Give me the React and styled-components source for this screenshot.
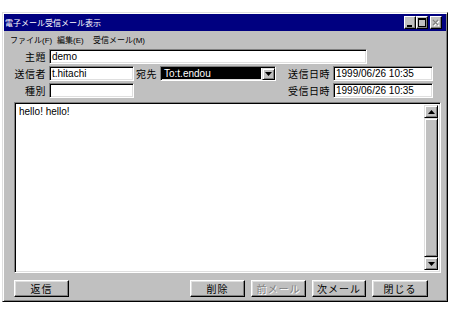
import React from "react";
import styled, { createGlobalStyle } from "styled-components";

const GlobalStyle = createGlobalStyle`
  body {
    margin: 0;
    background: #fff;
    font-family: "Liberation Sans", "Noto Sans CJK JP", sans-serif;
  }
`;

const Window = styled.div`
  margin: 12px 0 0 2px;
  width: 446px;
  height: 290px;
  box-sizing: border-box;
  background: #c0c0c0;
  border: 1px solid;
  border-color: #dfdfdf #000 #000 #dfdfdf;
  box-shadow: inset 1px 1px #fff, inset -1px -1px #808080;
  padding: 1px;
  display: flex;
  flex-direction: column;
`;

const TitleBar = styled.div`
  height: 17px;
  flex: none;
  background: #000080;
  color: #fff;
  display: flex;
  align-items: center;
  padding: 0 4px 0 1px;
  font-size: 8px;
`;

const TitleText = styled.div`
  flex: 1;
  white-space: nowrap;
`;

const CaptionButton = styled.div`
  width: 12px;
  height: 13px;
  box-sizing: border-box;
  background: #c0c0c0;
  border: 1px solid;
  border-color: #fff #000 #000 #fff;
  box-shadow: inset -1px -1px #808080;
  margin-left: ${(p) => p.$gap || 0}px;
  display: flex;
  align-items: center;
  justify-content: center;
`;

const MenuBar = styled.div`
  height: 16px;
  flex: none;
  display: flex;
  align-items: center;
  padding-left: 6px;
  font-size: 8px;
`;

const MenuItem = styled.div`
  width: ${(p) => p.$w}px;
  white-space: nowrap;
`;

const Form = styled.div`
  padding-top: 2px;
  display: flex;
  flex-direction: column;
  gap: 2px;
`;

const Row = styled.div`
  display: flex;
  align-items: center;
  height: 15px;
`;

const Label = styled.div`
  width: ${(p) => p.$w}px;
  box-sizing: border-box;
  text-align: right;
  padding-right: 3px;
  font-size: 10px;
  letter-spacing: 0.5px;
  white-space: nowrap;
`;

const Sunken = styled.div`
  box-sizing: border-box;
  border: 1px solid;
  border-color: #808080 #fff #fff #808080;
  box-shadow: inset 1px 1px #000, inset -1px -1px #dfdfdf;
`;

const Field = styled(Sunken)`
  width: ${(p) => p.$w}px;
  height: 15px;
  background: #fff;
  padding: 1px 1px 0 2px;
  font-size: 10px;
  line-height: 12px;
  white-space: nowrap;
  overflow: hidden;
`;

const Select = styled(Sunken)`
  width: ${(p) => p.$w}px;
  height: 15px;
  background: #fff;
  padding: 1px 0 0 1px;
  display: flex;
  gap: 1px;
`;

const Selected = styled.div`
  flex: 1;
  height: 11px;
  background: #000;
  color: #fff;
  font-size: 10px;
  line-height: 11px;
  padding-left: 2px;
  white-space: nowrap;
`;

const Raised = styled.div`
  box-sizing: border-box;
  background: #c0c0c0;
  border: 1px solid;
  border-color: #dfdfdf #000 #000 #dfdfdf;
  box-shadow: inset 1px 1px #fff, inset -1px -1px #808080;
  display: flex;
  align-items: center;
  justify-content: center;
`;

const DropButton = styled(Raised)`
  width: 13px;
  height: 12px;
`;

const TextPane = styled(Sunken)`
  margin: 4px 5px 0 10px;
  height: 171px;
  flex: none;
  display: flex;
  padding: 2px;
  background: #fff;
`;

const TextContent = styled.div`
  flex: 1;
  padding: 1px 2px;
  font-size: 10px;
  line-height: 12px;
`;

const ScrollBar = styled.div`
  width: 14px;
  display: flex;
  flex-direction: column;
  background: #c0c0c0;
`;

const ScrollArrow = styled(Raised)`
  height: 13px;
  flex: none;
`;

const ScrollTrack = styled(Raised)`
  flex: 1;
`;

const ButtonRow = styled.div`
  margin-top: 7px;
  height: 17px;
  display: flex;
  padding: 0 18px 0 10px;
`;

const ButtonGroup = styled.div`
  margin-left: auto;
  display: flex;
  gap: 6px;
`;

const Button = styled.div`
  width: ${(p) => p.$w}px;
  height: 17px;
  box-sizing: border-box;
  background: #c0c0c0;
  border: 1px solid;
  border-color: #fff #000 #000 #fff;
  box-shadow: inset -1px -1px #808080, inset 1px 1px #dfdfdf;
  display: flex;
  align-items: center;
  justify-content: center;
  font-size: 10px;
  letter-spacing: 1px;
  color: ${(p) => (p.$disabled ? "#808080" : "#000")};
  text-shadow: ${(p) => (p.$disabled ? "1px 1px #fff" : "none")};
  white-space: nowrap;
`;

const Arrow = ({ down }) => (
  <svg width="7" height="4" viewBox="0 0 7 4">
    <path d={down ? "M0 0h7L3.5 4z" : "M0 4h7L3.5 0z"} fill="#000" />
  </svg>
);

const App = () => {
  return (
    <>
      <GlobalStyle />
      <Window>
        <TitleBar>
          <TitleText>電子メール受信メール表示</TitleText>
          <CaptionButton>
            <svg width="8" height="9" viewBox="0 0 8 9">
              <rect x="1" y="7" width="5" height="2" fill="#000" />
            </svg>
          </CaptionButton>
          <CaptionButton>
            <svg width="8" height="9" viewBox="0 0 8 9">
              <path d="M0 0h8v9H0z M1 2v6h6V2z" fill="#000" fillRule="evenodd" />
            </svg>
          </CaptionButton>
          <CaptionButton $gap={2}>
            <svg width="8" height="8" viewBox="0 0 8 8">
              <path d="M2 2l5 5M7 2l-5 5" stroke="#fff" strokeWidth="1.2" />
              <path d="M1 1l5 5M6 1l-5 5" stroke="#808080" strokeWidth="1.2" />
            </svg>
          </CaptionButton>
        </TitleBar>
        <MenuBar>
          <MenuItem $w={47}>ファイル(F)</MenuItem>
          <MenuItem $w={36}>編集(E)</MenuItem>
          <MenuItem $w={60}>受信メール(M)</MenuItem>
        </MenuBar>
        <Form>
          <Row>
            <Label $w={45}>主題</Label>
            <Field $w={318}>demo</Field>
          </Row>
          <Row>
            <Label $w={45}>送信者</Label>
            <Field $w={85}>t.hitachi</Field>
            <Label $w={26}>宛先</Label>
            <Select $w={116}>
              <Selected>To:t.endou</Selected>
              <DropButton>
                <Arrow down />
              </DropButton>
            </Select>
            <Label $w={57}>送信日時</Label>
            <Field $w={100}>1999/06/26 10:35</Field>
          </Row>
          <Row>
            <Label $w={45}>種別</Label>
            <Field $w={85} />
            <Label $w={199}>受信日時</Label>
            <Field $w={100}>1999/06/26 10:35</Field>
          </Row>
        </Form>
        <TextPane>
          <TextContent>hello! hello!</TextContent>
          <ScrollBar>
            <ScrollArrow>
              <Arrow />
            </ScrollArrow>
            <ScrollTrack />
            <ScrollArrow>
              <Arrow down />
            </ScrollArrow>
          </ScrollBar>
        </TextPane>
        <ButtonRow>
          <Button $w={55}>返信</Button>
          <ButtonGroup>
            <Button $w={55}>削除</Button>
            <Button $w={55} $disabled>
              前メール
            </Button>
            <Button $w={54}>次メール</Button>
            <Button $w={56}>閉じる</Button>
          </ButtonGroup>
        </ButtonRow>
      </Window>
    </>
  );
};

export default App;
